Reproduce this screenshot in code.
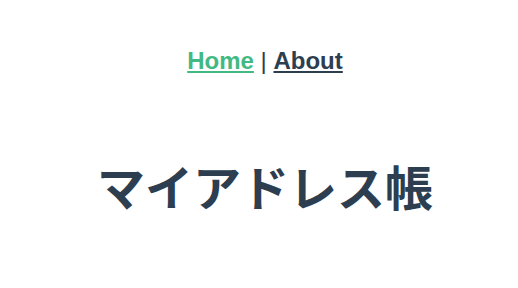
const App = () => {
  return (
    <div
      className="pl-[12px] text-center text-[#2c3e50] antialiased"
      style={{ fontFamily: '"Liberation Sans", Arial, "Noto Sans CJK JP", sans-serif' }}
    >
      <nav className="px-[45px] pt-[47px] pb-[43px] text-[24px] leading-[normal]">
        <a href="#" className="font-bold text-[#42b983] underline">
          Home
        </a>{" "}
        |{" "}
        <a href="#" className="font-bold text-[#2c3e50] underline">
          About
        </a>
      </nav>
      <div>
        <h1 className="my-[32px] text-[48px] font-bold leading-[normal]">マイアドレス帳</h1>
      </div>
    </div>
  );
};

export default App;
